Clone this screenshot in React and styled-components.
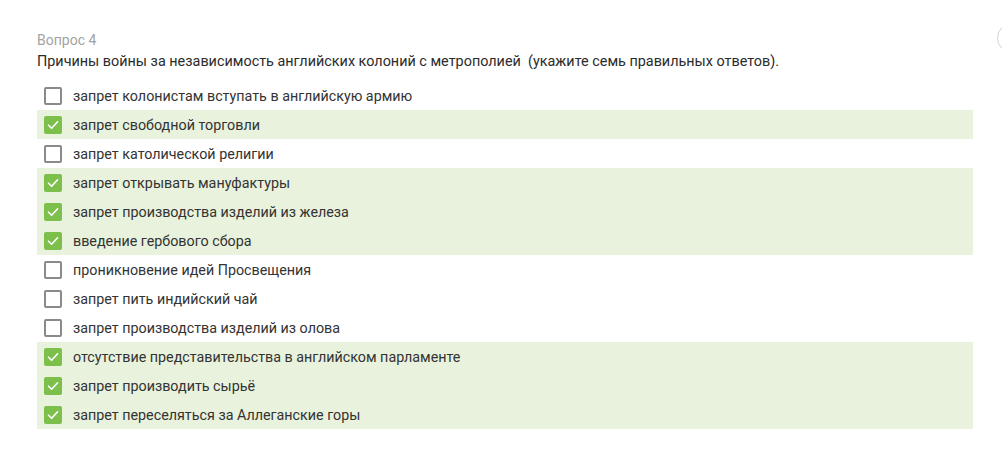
import React from "react";
import styled, { createGlobalStyle } from "styled-components";

const GlobalStyle = createGlobalStyle`
  body {
    margin: 0;
    background: #fff;
    font-family: Roboto, "Liberation Sans", sans-serif;
    overflow: hidden;
  }
`;

const Page = styled.div`
  position: relative;
  width: 1002px;
  height: 453px;
  padding: 31px 0 0 37px;
  box-sizing: border-box;
`;

const Question = styled.div`
  width: 936px;
`;

const Label = styled.div`
  font-size: 14px;
  line-height: 18px;
  color: #a3a3a3;
`;

const Text = styled.div`
  margin-top: 4px;
  font-size: 14.4px;
  line-height: 18px;
  color: #2b2b2b;
  white-space: pre;
`;

const List = styled.ul`
  margin: 10px 0 0;
  padding: 0;
  list-style: none;
`;

const Option = styled.li`
  display: flex;
  align-items: center;
  gap: 11px;
  height: 29px;
  padding-left: 7px;
  background: ${(p) => (p.$checked ? "#e8f2dc" : "transparent")};
  font-size: 14.3px;
  line-height: 18px;
  color: #333;
`;

const Box = styled.span`
  display: flex;
  align-items: center;
  justify-content: center;
  flex: none;
  width: 18px;
  height: 18px;
  box-sizing: border-box;
  border-radius: 2px;
  border: ${(p) => (p.$checked ? "none" : "2px solid #8a8a8a")};
  background: ${(p) => (p.$checked ? "#7cc04b" : "#fff")};
`;

const Circle = styled.div`
  position: absolute;
  left: 997px;
  top: 23px;
  width: 28px;
  height: 28px;
  border-radius: 50%;
  border: 1px solid #d4d4d4;
`;

const options = [
  ["запрет колонистам вступать в английскую армию", false],
  ["запрет свободной торговли", true],
  ["запрет католической религии", false],
  ["запрет открывать мануфактуры", true],
  ["запрет производства изделий из железа", true],
  ["введение гербового сбора", true],
  ["проникновение идей Просвещения", false],
  ["запрет пить индийский чай", false],
  ["запрет производства изделий из олова", false],
  ["отсутствие представительства в английском парламенте", true],
  ["запрет производить сырьё", true],
  ["запрет переселяться за Аллеганские горы", true],
];

function Check() {
  return (
    <svg width="14" height="14" viewBox="0 0 14 14">
      <path
        d="M2.5 7.2 L5.6 10.2 L11.6 3.8"
        fill="none"
        stroke="#fff"
        strokeWidth="1.6"
        strokeLinecap="round"
        strokeLinejoin="round"
      />
    </svg>
  );
}

export default function App() {
  return (
    <Page>
      <GlobalStyle />
      <Question>
        <Label>Вопрос 4</Label>
        <Text>
          Причины войны за независимость английских колоний с метрополией  (укажите семь правильных ответов).
        </Text>
        <List>
          {options.map(([text, checked]) => (
            <Option key={text} $checked={checked}>
              <Box $checked={checked}>{checked && <Check />}</Box>
              <span>{text}</span>
            </Option>
          ))}
        </List>
      </Question>
      <Circle />
    </Page>
  );
}
